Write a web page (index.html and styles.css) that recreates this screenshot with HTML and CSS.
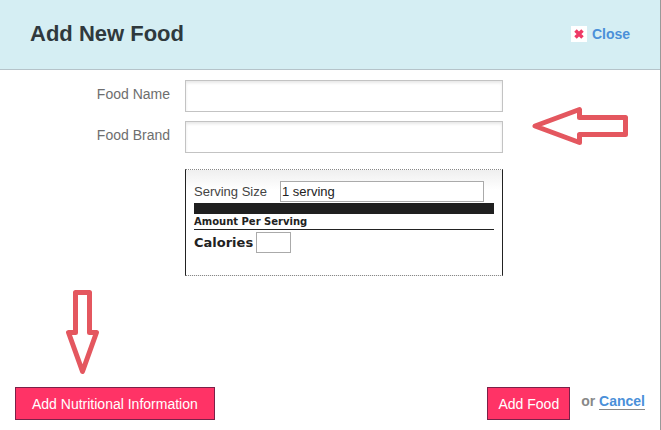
FILE: index.html
```
<!DOCTYPE html>
<html lang="en">
<head>
    <meta charset="UTF-8">
    <meta name="viewport" content="width=device-width, initial-scale=1.0">
    <title>Add New Food</title>
    <link rel="stylesheet" href="styles.css">
</head>
<body>
    <div class="dialog">
        <header class="dialog-header">
            <h1>Add New Food</h1>
            <a class="close" href="#">
                <svg class="close-icon" width="16" height="16" viewBox="0 0 16 16" aria-hidden="true">
                    <rect width="16" height="16" fill="#fff"/>
                    <path d="M4.500 4.500l7 7M11.500 4.500l-7 7" stroke="#ee3a66" stroke-width="3.500"/>
                </svg>
                Close
            </a>
        </header>

        <form class="food-form">
            <div class="fields">
                <div class="field-list">
                    <div class="field">
                        <label for="food-name">Food Name</label>
                        <input type="text" id="food-name">
                    </div>
                    <div class="field">
                        <label for="food-brand">Food Brand</label>
                        <input type="text" id="food-brand">
                    </div>
                </div>
                <svg class="arrow" width="96" height="40" viewBox="0 0 96 40" aria-hidden="true">
                    <path d="M3 20L47.500 3.500V11.500H93.500V28.500H47.500V36.500Z"/>
                </svg>
            </div>

            <div class="nutrition">
                <div class="serving">
                    <label for="serving-size">Serving Size</label>
                    <input type="text" id="serving-size" value="1 serving">
                </div>
                <div class="amount">Amount Per Serving</div>
                <div class="calories">
                    <label for="calories">Calories</label>
                    <input type="text" id="calories">
                </div>
            </div>

            <div class="actions">
                <div class="more">
                    <svg class="arrow" width="34" height="84" viewBox="0 0 34 84" aria-hidden="true">
                        <path d="M10.500 2.500H24.500V42.500H31.500L17.500 81.500L3.500 42.500H10.500Z"/>
                    </svg>
                    <button type="button" class="btn btn-more">Add Nutritional Information</button>
                </div>
                <div class="submit">
                    <button type="submit" class="btn">Add Food</button>
                    <span class="or">or <a href="#">Cancel</a></span>
                </div>
            </div>
        </form>
    </div>
</body>
</html>
```

FILE: styles.css
```
* {
    box-sizing: border-box;
}
body {
    margin: 0;
    font-family: "Liberation Sans", Arial, sans-serif;
    font-size: 14px;
    background-color: #fff;
}
input {
    font-family: inherit;
    border-radius: 0;
    outline: none;
}
.dialog {
    display: flex;
    flex-direction: column;
    min-height: 100vh;
    border-right: 1px solid #999;
}
.dialog-header {
    display: flex;
    justify-content: space-between;
    align-items: center;
    padding: 19px 30px 21px;
    background-color: #d5eef3;
    border-bottom: 1px solid #b5c3c9;
}
.dialog-header h1 {
    margin: 0;
    font-size: 22px;
    line-height: 29px;
    color: #2f393d;
}
.close {
    display: flex;
    align-items: center;
    gap: 5px;
    font-weight: bold;
    color: #4a90d9;
    text-decoration: none;
}
.food-form {
    display: flex;
    flex-direction: column;
    flex: 1;
    padding: 10px 15px;
}
.fields {
    display: flex;
    align-items: flex-end;
    gap: 29px;
}
.fields .arrow {
    margin-bottom: 7px;
}
.field-list {
    display: flex;
    flex-direction: column;
    gap: 9px;
}
.field {
    display: flex;
    gap: 15px;
}
.field label {
    width: 155px;
    line-height: 28px;
    text-align: right;
    color: #6e6e6e;
}
.field input {
    width: 318px;
    height: 32px;
    padding: 4px 8px;
    border: 1px solid #c3c3c3;
    box-shadow: inset 0 2px 3px #e8e8e8;
    font-size: 14px;
}
.arrow path {
    fill: none;
    stroke: #e4575f;
    stroke-width: 5;
    stroke-linejoin: round;
}
.nutrition {
    width: 318px;
    margin: 16px 0 14px 170px;
    padding: 11px 8px 22px;
    border: 1px solid #222;
    border-top: 1px dotted #888;
    border-bottom: 1px dotted #888;
    background: linear-gradient(#efefef, #fff 20px);
    color: #222;
}
.serving {
    display: flex;
    align-items: center;
    padding-bottom: 1px;
    border-bottom: 11px solid #1f1f1f;
}
.serving label {
    width: 86px;
    font-size: 13px;
    color: #444;
}
.nutrition input {
    height: 21px;
    padding: 0 1px;
    border: 1px solid #aaa;
    font-size: 13px;
    color: #222;
}
.serving input {
    width: 204px;
}
.amount {
    border-bottom: 1px solid #222;
    font: bold 10px/15px "DejaVu Sans", Verdana, sans-serif;
}
.calories {
    display: flex;
    align-items: center;
    gap: 3px;
    padding-top: 2px;
    font: bold 13px/21px "DejaVu Sans", Verdana, sans-serif;
}
.calories input {
    width: 35px;
}
.actions {
    display: flex;
    justify-content: space-between;
    align-items: flex-end;
    margin-top: auto;
}
.more {
    display: flex;
    flex-direction: column;
    gap: 13px;
}
.more .arrow {
    margin-left: 50px;
}
.btn {
    height: 33px;
    padding: 0 10px;
    border: 1px solid #7a2148;
    background-color: #ff3366;
    color: #fff;
    font: 14px "Liberation Sans", Arial, sans-serif;
    cursor: pointer;
}
.btn-more {
    padding: 0 16px;
}
.submit {
    display: flex;
    gap: 11px;
}
.or {
    padding-top: 6px;
    font-weight: bold;
    color: #888;
}
.or a {
    color: #4a90d9;
    text-decoration: none;
    border-bottom: 1px solid #888;
}
```
